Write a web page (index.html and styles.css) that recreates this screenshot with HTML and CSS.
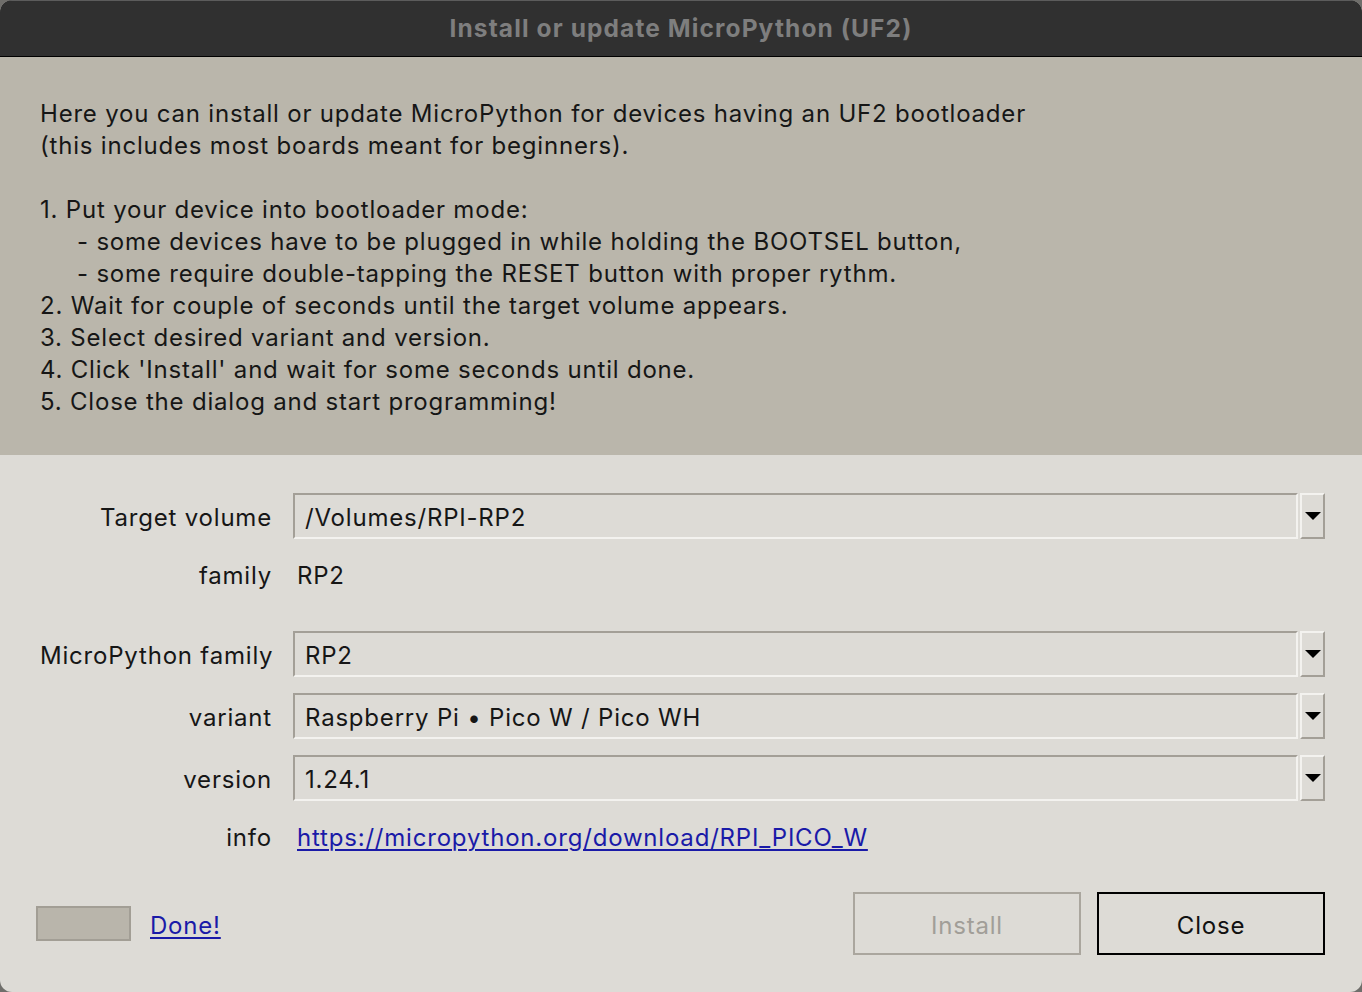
FILE: index.html
```html
<!DOCTYPE html>
<html>
<head>
<meta charset="utf-8">
<link rel="stylesheet" href="styles.css">
</head>
<body>
<div class="window">
  <div class="titlebar">Install or update MicroPython (UF2)</div>
  <div class="intro">
    <p class="line">Here you can install or update MicroPython for devices having an UF2 bootloader</p>
    <p class="line">(this includes most boards meant for beginners).</p>
    <p class="line blank">&nbsp;</p>
    <p class="line">1. Put your device into bootloader mode:</p>
    <p class="line indent">- some devices have to be plugged in while holding the BOOTSEL button,</p>
    <p class="line indent">- some require double-tapping the RESET button with proper rythm.</p>
    <p class="line">2. Wait for couple of seconds until the target volume appears.</p>
    <p class="line">3. Select desired variant and version.</p>
    <p class="line">4. Click 'Install' and wait for some seconds until done.</p>
    <p class="line">5. Close the dialog and start programming!</p>
  </div>
  <div class="form">
    <div class="grid">
      <div class="label">Target volume</div>
      <div class="combo"><div class="field">/Volumes/RPI-RP2</div><div class="arrow"><span class="tri"></span></div></div>

      <div class="label text-row">family</div>
      <div class="value text-row">RP2</div>

      <div class="label spaced">MicroPython family</div>
      <div class="combo spaced"><div class="field">RP2</div><div class="arrow"><span class="tri"></span></div></div>

      <div class="label">variant</div>
      <div class="combo"><div class="field">Raspberry Pi • Pico W / Pico WH</div><div class="arrow"><span class="tri"></span></div></div>

      <div class="label">version</div>
      <div class="combo"><div class="field">1.24.1</div><div class="arrow"><span class="tri"></span></div></div>

      <div class="label text-row">info</div>
      <div class="value text-row"><a class="link" href="#">https://micropython.org/download/RPI_PICO_W</a></div>
    </div>
    <div class="footer">
      <div class="progress"></div>
      <a class="link done" href="#">Done!</a>
      <div class="spacer"></div>
      <div class="btn disabled">Install</div>
      <div class="btn primary">Close</div>
    </div>
  </div>
</div>
</body>
</html>
```
FILE: styles.css
```css
html, body {
  margin: 0;
  padding: 0;
  background: #6f6e6b;
}
body {
  width: 1362px;
  height: 992px;
  overflow: hidden;
  font-family: "Inter", "Noto Sans", sans-serif;
  letter-spacing: 0.8px;
}
.window {
  width: 1362px;
  height: 992px;
  border-radius: 12px;
  overflow: hidden;
  display: flex;
  flex-direction: column;
  background: #dddbd6;
}
.titlebar {
  flex: none;
  background: #303030;
  border-top: 1px solid #5c5c5c;
  box-sizing: border-box;
  border-bottom: 1px solid #000;
  height: 57px;
  color: #7e7e7e;
  font-weight: 700;
  font-size: 24.5px;
  letter-spacing: 1.1px;
  display: flex;
  align-items: center;
  justify-content: center;
  padding-bottom: 2px;
}
.intro {
  background: #bab6ab;
  height: 398px;
  box-sizing: border-box;
  padding: 41px 40px 0 40px;
  color: #161616;
  font-size: 24px;
}
.line {
  margin: 0;
  height: 32px;
  line-height: 32px;
  white-space: nowrap;
}
.indent {
  padding-left: 37px;
}
.form {
  flex: 1;
  padding: 38px 37px 0 40px;
  display: flex;
  flex-direction: column;
  font-size: 24px;
  color: #161616;
}
.grid {
  display: grid;
  grid-template-columns: 232px 1fr;
  column-gap: 21px;
  row-gap: 16px;
}
.label {
  text-align: right;
  height: 46px;
  line-height: 50px;
  white-space: nowrap;
}
.text-row {
  height: 40px;
  line-height: 42px;
}
.value {
  padding-left: 4px;
}
.spaced {
  margin-top: 20px;
}
.combo {
  display: flex;
  height: 46px;
}
.field {
  flex: 1;
  box-sizing: border-box;
  height: 46px;
  line-height: 46px;
  padding-left: 10px;
  border-style: solid;
  border-width: 2px;
  border-color: #a39f97 #f3f2ef #f3f2ef #a39f97;
  white-space: nowrap;
}
.arrow {
  width: 25px;
  margin-left: 2px;
  box-sizing: border-box;
  border-style: solid;
  border-width: 2px;
  border-color: #f3f2ef #a39f97 #a39f97 #f3f2ef;
  display: flex;
  align-items: center;
  justify-content: center;
}
.tri {
  width: 0;
  height: 0;
  border-left: 8px solid transparent;
  border-right: 8px solid transparent;
  border-top: 8px solid #000;
}
.link {
  color: #1a1aa8;
  text-decoration: underline;
  text-underline-offset: 3px;
  text-decoration-thickness: 2px;
}
.footer {
  display: flex;
  align-items: center;
  margin-top: 35px;
  margin-left: -4px;
}
.progress {
  width: 95px;
  height: 35px;
  box-sizing: border-box;
  background: #b9b5ab;
  border: 2px solid #a29e95;
}
.done {
  margin-left: 19px;
  padding-top: 4px;
}
.spacer {
  flex: 1;
}
.btn {
  width: 228px;
  height: 63px;
  box-sizing: border-box;
  display: flex;
  align-items: center;
  justify-content: center;
  font-size: 24px;
  padding-top: 3px;
}
.disabled {
  color: #a19e98;
  border: 2px solid #aaa69e;
  margin-right: 16px;
}
.primary {
  color: #111;
  border: 2px solid #000;
}
```
